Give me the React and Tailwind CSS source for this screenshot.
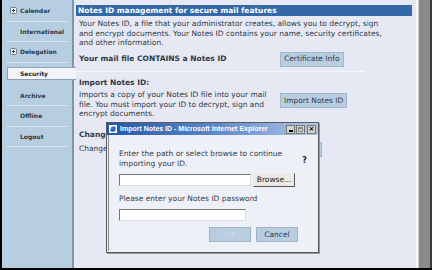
import { useState } from 'react';

const sideItems = [
  { label: 'Calendar', plus: true },
  { label: 'International' },
  { label: 'Delegation', plus: true },
  { label: 'Security', active: true },
  { label: 'Archive' },
  { label: 'Offline' },
  { label: 'Logout' },
];

function PlusIcon() {
  return (
    <svg width="7" height="7" viewBox="0 0 7 7" className="shrink-0">
      <rect x="0.5" y="0.5" width="6" height="6" rx="1" fill="#e8eef5" stroke="#6b7f93" />
      <path d="M2 3.5h3M3.5 2v3" stroke="#2d3e50" strokeWidth="1" />
    </svg>
  );
}

function SideNav() {
  return (
    <div className="flex w-[72px] shrink-0 flex-col border-r-2 border-[#7f95aa] bg-[#b7cde0] pt-[1px]">
      {sideItems.map((item) =>
        item.active ? (
          <div
            key={item.label}
            className="relative z-10 -mr-[4px] ml-[5px] mt-[4px] mb-[6px] flex h-[13px] items-center border border-[#8da2b6] border-r-0 bg-[#f2f4fa] pl-[12px] text-[6px] font-bold text-[#1b2836]"
          >
            {item.label}
          </div>
        ) : (
          <div
            key={item.label}
            className="mx-[4px] flex h-[20.5px] items-center gap-[3px] border-b border-[#d6e2ee] pl-[3px] text-[6px] text-[#2a3a4b]"
          >
            <span className="flex w-[8px] justify-center">{item.plus && <PlusIcon />}</span>
            <span className="font-semibold">{item.label}</span>
          </div>
        )
      )}
    </div>
  );
}

function PageButton({ children }) {
  return (
    <div className="flex h-[15px] items-center border border-[#9fb6cc] bg-[#b9cde0] px-[3px] text-[7.5px] text-[#2c3a48]">
      {children}
    </div>
  );
}

function DialogButton({ children, disabled }) {
  return (
    <div
      className={`flex h-[15px] w-[42px] items-center justify-center border border-[#9db3c8] bg-[#b8cde0] text-[7.5px] ${
        disabled ? 'text-[#d5dfe9]' : 'text-[#2c3a48]'
      }`}
    >
      {children}
    </div>
  );
}

function ImportDialog() {
  const [path, setPath] = useState('');
  const [pwd, setPwd] = useState('');

  return (
    <div className="absolute left-[104px] top-[122px] flex h-[131px] w-[213px] flex-col border border-[#5a5a5a] bg-[#eef0f8] shadow-[1px_1px_0_#9a9a9a]">
      <div className="flex h-[12px] items-center bg-gradient-to-r from-[#1f57ab] via-[#5b86c6] to-[#b3c8e6] pl-[2px] pr-[2px]">
        <svg width="8" height="8" viewBox="0 0 8 8" className="shrink-0">
          <rect x="0" y="0" width="8" height="8" fill="#ffffff" />
          <path d="M1 6.5c1-3 3-5 6-5.5-1 1.5-1.2 3.5-.5 5.5z" fill="#2f74d0" />
          <circle cx="4" cy="4" r="2" fill="none" stroke="#1b4f9e" strokeWidth="1" />
        </svg>
        <span
          className="ml-[3px] whitespace-nowrap text-[7px] font-bold text-white"
          style={{ fontFamily: '"Liberation Sans", Arial, sans-serif' }}
        >
          Import Notes ID - Microsoft Internet Explorer
        </span>
        <div className="ml-auto flex gap-[1px]">
          <div className="flex h-[9px] w-[9px] items-end justify-center border border-[#777] bg-[#d6d3cc] pb-[1px]">
            <div className="h-[1.5px] w-[4px] bg-black" />
          </div>
          <div className="flex h-[9px] w-[9px] items-center justify-center border border-[#777] bg-[#d6d3cc]">
            <div className="h-[5px] w-[5px] border border-[#888] border-t-2" />
          </div>
          <div className="ml-[1px] flex h-[9px] w-[9px] items-center justify-center border border-[#777] bg-[#d6d3cc] text-[7px] font-bold leading-none text-black">
            ×
          </div>
        </div>
      </div>
      <div className="mx-[1px] mb-[1px] flex flex-1 flex-col border-l border-[#8c8c8c] px-[10px] pt-[14px] text-[7.5px] leading-[10px] text-[#333c46]">
        <div className="flex items-center justify-between">
          <p>
            Enter the path or select browse to continue
            <br />
            importing your ID.
          </p>
          <span className="mt-[4px] text-[8px] font-bold text-[#222]">?</span>
        </div>
        <div className="mt-[4px] flex items-center gap-[2px]">
          <input
            value={path}
            onChange={(e) => setPath(e.target.value)}
            className="h-[12px] w-[132px] border border-[#777] border-r-[#ddd] border-b-[#ddd] bg-white"
          />
          <div className="flex h-[14px] w-[42px] items-center justify-center border border-[#555] border-l-[#eee] border-t-[#eee] bg-[#ece9e2] text-[7.5px] text-[#222]">
            Browse...
          </div>
        </div>
        <p className="mt-[7px]">Please enter your Notes ID password</p>
        <input
          type="password"
          value={pwd}
          onChange={(e) => setPwd(e.target.value)}
          className="mt-[5px] h-[12px] w-[127px] border border-[#777] border-r-[#ddd] border-b-[#ddd] bg-white"
        />
        <div className="mt-[6px] flex justify-end gap-[5px] pr-[9px]">
          <DialogButton disabled>OK</DialogButton>
          <DialogButton>Cancel</DialogButton>
        </div>
      </div>
    </div>
  );
}

export default function App() {
  return (
    <div
      className="relative flex h-[270px] w-[432px] overflow-hidden border-b-2 border-l-2 border-black bg-[#e6e9f4]"
      style={{ fontFamily: '"DejaVu Sans", Verdana, sans-serif' }}
    >
      <SideNav />

      <main className="flex flex-1 flex-col pl-[2px] pr-[4px] pt-[5px] text-[7.5px] leading-[9.5px] text-[#2d3946]">
        <div className="flex h-[11px] items-center bg-[#3568a7] px-[2px] text-[7.5px] font-bold text-white">
          Notes ID management for secure mail features
        </div>

        <section className="px-[3px] pt-[3px]">
          <p>
            Your Notes ID, a file that your administrator creates, allows you to decrypt, sign
            <br />
            and encrypt documents. Your Notes ID contains your name, security certificates,
            <br />
            and other information.
          </p>
          <div className="mt-[4px] flex items-center">
            <span className="w-[201px] font-bold">Your mail file CONTAINS a Notes ID</span>
            <PageButton>Certificate Info</PageButton>
          </div>
        </section>

        <div className="mt-[4px] h-px w-[288px] bg-[#f7f8fc]" />

        <section className="px-[3px] pt-[6px]">
          <p className="font-bold">Import Notes ID:</p>
          <div className="mt-[3px] flex items-start">
            <p className="w-[200px]">
              Imports a copy of your Notes ID file into your mail file. You must import your ID to
              decrypt, sign and encrypt documents.
            </p>
            <div className="ml-[1px] mt-[3px]">
              <PageButton>Import Notes ID</PageButton>
            </div>
          </div>
        </section>

        <section className="px-[3px] pt-[11px]">
          <p className="font-bold">Change Notes ID Password:</p>
          <div className="mt-[5px] flex items-start">
            <p className="w-[206px]">Change the password of your Notes ID.</p>
            <div className="-mt-[2px]">
              <PageButton>Change</PageButton>
            </div>
          </div>
        </section>
      </main>

      <div className="flex w-[16px] shrink-0">
        <div className="w-[2px] bg-[#f8f9fc]" />
        <div className="w-[1px] bg-[#c9ccd2]" />
        <div className="flex-1 bg-[#8a8a8a]" />
        <div className="w-[2px] bg-[#3a3a3a]" />
      </div>

      <ImportDialog />
    </div>
  );
}
